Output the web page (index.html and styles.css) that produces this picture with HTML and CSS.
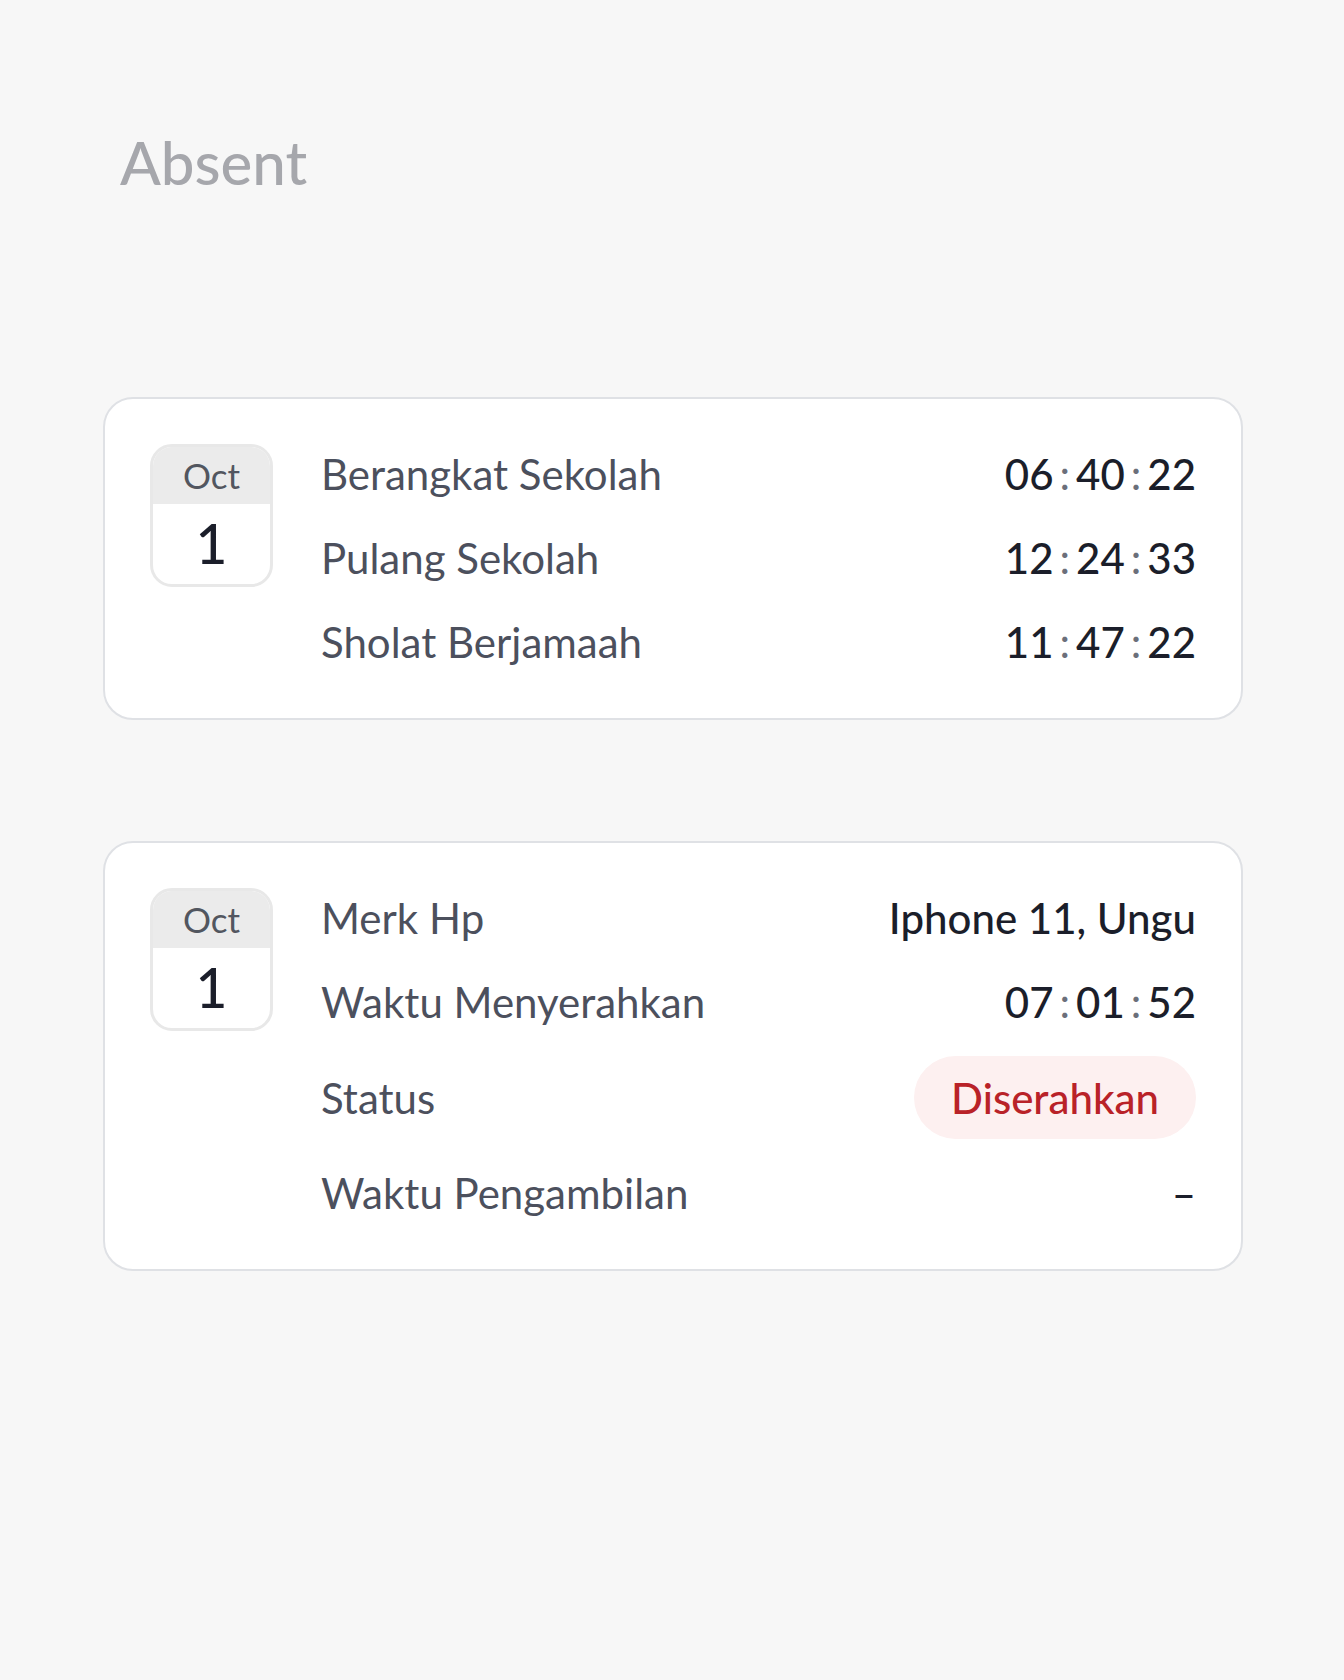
FILE: index.html
```html
<!DOCTYPE html>
<html lang="id">
<head>
<meta charset="utf-8">
<title>Absent</title>
<link rel="stylesheet" href="styles.css">
</head>
<body>
<main class="page">
  <h1 class="title">Absent</h1>

  <section class="card">
    <div class="date">
      <div class="date-month">Oct</div>
      <div class="date-day">1</div>
    </div>
    <div class="rows">
      <div class="row">
        <span class="label">Berangkat Sekolah</span>
        <span class="value">06<span class="colon">:</span>40<span class="colon">:</span>22</span>
      </div>
      <div class="row">
        <span class="label">Pulang Sekolah</span>
        <span class="value">12<span class="colon">:</span>24<span class="colon">:</span>33</span>
      </div>
      <div class="row">
        <span class="label">Sholat Berjamaah</span>
        <span class="value">11<span class="colon">:</span>47<span class="colon">:</span>22</span>
      </div>
    </div>
  </section>

  <section class="card">
    <div class="date">
      <div class="date-month">Oct</div>
      <div class="date-day">1</div>
    </div>
    <div class="rows">
      <div class="row">
        <span class="label">Merk Hp</span>
        <span class="value">Iphone 11, Ungu</span>
      </div>
      <div class="row">
        <span class="label">Waktu Menyerahkan</span>
        <span class="value">07<span class="colon">:</span>01<span class="colon">:</span>52</span>
      </div>
      <div class="row">
        <span class="label">Status</span>
        <span class="badge">Diserahkan</span>
      </div>
      <div class="row">
        <span class="label">Waktu Pengambilan</span>
        <span class="value">–</span>
      </div>
    </div>
  </section>
</main>
</body>
</html>
```

FILE: styles.css
```css
* {
  box-sizing: border-box;
}

html, body {
  margin: 0;
  padding: 0;
  background: #f7f7f7;
}

body {
  font-family: Lato, "Noto Sans", "Liberation Sans", sans-serif;
  min-height: 1680px;
}

.page {
  width: 1344px;
  padding: 126px 0 0 103px;
  display: flex;
  flex-direction: column;
}

.title {
  margin: 0 0 199px 17px;
  font-size: 60px;
  line-height: 72px;
  font-weight: 500;
  color: #a6a7ac;
}

.card {
  width: 1140px;
  background: #ffffff;
  border: 2px solid #dfe1e5;
  border-radius: 30px;
  padding: 45px 45px 46px 45px;
  display: flex;
  align-items: flex-start;
  gap: 48px;
  margin-bottom: 121px;
}

.date {
  width: 123px;
  height: 143px;
  flex: none;
  border: 3px solid #e8e8e8;
  border-radius: 22px;
  overflow: hidden;
  display: flex;
  flex-direction: column;
  background: #ffffff;
}

.date-month {
  height: 57px;
  background: #ebebeb;
  color: #52565f;
  font-size: 35px;
  line-height: 57px;
  text-align: center;
}

.date-day {
  flex: 1;
  display: flex;
  align-items: center;
  justify-content: center;
  font-size: 55px;
  font-weight: 500;
  color: #1b1e2a;
  padding-bottom: 2px;
}

.rows {
  flex: 1;
  display: flex;
  flex-direction: column;
  gap: 24px;
}

.row {
  display: flex;
  justify-content: space-between;
  align-items: center;
  font-size: 42px;
  line-height: 60px;
}

.label {
  color: #4c505d;
}

.value {
  color: #1b1e2a;
  font-weight: 500;
}

.colon {
  color: #6b6f7a;
  font-weight: 400;
  margin: 0 6px;
}

.badge {
  background: #fdf0f0;
  color: #b92228;
  font-weight: 500;
  border-radius: 999px;
  padding: 11.5px 37px;
  line-height: 60px;
}
```
